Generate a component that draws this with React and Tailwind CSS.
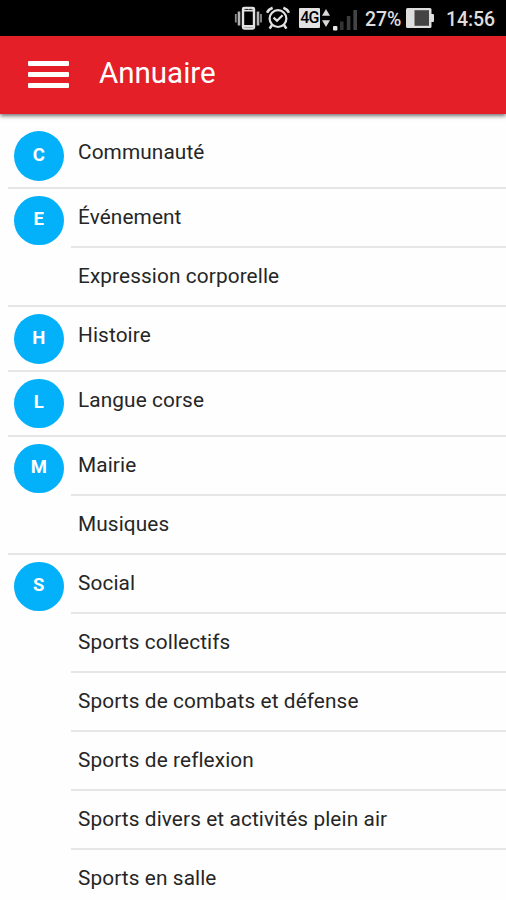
import React from 'react';

const sections = [
  { letter: 'C', items: ['Communauté'] },
  { letter: 'E', items: ['Événement', 'Expression corporelle'] },
  { letter: 'H', items: ['Histoire'] },
  { letter: 'L', items: ['Langue corse'] },
  { letter: 'M', items: ['Mairie', 'Musiques'] },
  {
    letter: 'S',
    items: [
      'Social',
      'Sports collectifs',
      'Sports de combats et défense',
      'Sports de reflexion',
      'Sports divers et activités plein air',
      'Sports en salle',
    ],
  },
];

function VibrateIcon() {
  return (
    <svg className="h-6 w-7 shrink-0" viewBox="0 0 28 24" fill="none" aria-hidden="true">
      <rect x="9" y="1.9" width="11" height="20.6" rx="1.2" stroke="#e2e2e2" strokeWidth="2.4" />
      <path d="M9 4.4h11M9 20h11" stroke="#e2e2e2" strokeWidth="2" />
      <path d="M11.4 3.4h2.4m1.6 0h2" stroke="#222" strokeWidth="1" />
      <path d="M5 5.5v14M24 5.5v14" stroke="#b4b4b4" strokeWidth="2.6" />
      <path d="M1.8 8v8.5M27 8v8.5" stroke="#8c8c8c" strokeWidth="1.8" />
    </svg>
  );
}

function AlarmIcon() {
  return (
    <svg className="h-6 w-6 shrink-0" viewBox="0 0 24 24" fill="none" stroke="#e2e2e2" aria-hidden="true">
      <circle cx="12" cy="12.6" r="8.4" strokeWidth="2.2" />
      <path d="M1 6.8q1.6-3.4 5.6-5M23 6.8q-1.6-3.4-5.6-5" strokeWidth="2.6" />
      <path d="M6 19 3.6 22.6M18 19l2.4 3.6" strokeWidth="2.6" />
      <path d="m7.6 11.6 3.4 3.2 5.6-5.6" strokeWidth="2.2" />
    </svg>
  );
}

function DataArrows() {
  return (
    <svg className="h-5 w-2 shrink-0" viewBox="0 0 8 20" fill="#d8d8d8" aria-hidden="true">
      <path d="M4 1 8 7.8H0zM4 19 0 12.2h8z" />
    </svg>
  );
}

function SignalIcon() {
  return (
    <svg className="h-6 w-6 shrink-0" viewBox="0 0 24 24" aria-hidden="true">
      <rect x="0" y="18" width="4.4" height="4.4" rx="1" fill="#e8e8e8" />
      <rect x="7" y="13.5" width="3.6" height="8.5" fill="#333" />
      <rect x="13.8" y="8" width="3.6" height="14" fill="#3c3c3c" />
      <rect x="20.4" y="2" width="3.6" height="20" fill="#444" />
    </svg>
  );
}

function BatteryIcon() {
  return (
    <svg className="h-5 w-7 shrink-0" viewBox="0 0 28 20" aria-hidden="true">
      <rect x="0" y="0" width="25.5" height="20" rx="1.5" fill="#dedede" />
      <rect x="24" y="6" width="4" height="8" rx="1" fill="#dedede" />
      <rect x="8.5" y="2.2" width="14.5" height="15.6" fill="#444" />
    </svg>
  );
}

function StatusBar() {
  return (
    <div className="flex h-9 items-center justify-end bg-black pr-[10px] text-[19.5px] leading-none font-medium text-[#dddddd]">
      <VibrateIcon />
      <div className="ml-1">
        <AlarmIcon />
      </div>
      <span className="ml-[9px] flex h-5 w-[21px] items-center justify-center rounded-[1px] bg-[#e2e2e2] text-[16px] tracking-tighter text-black">
        4G
      </span>
      <div className="ml-[2px]">
        <DataArrows />
      </div>
      <div className="ml-[3px] pt-1">
        <SignalIcon />
      </div>
      <span className="ml-2 w-[41px] pt-[3px] tracking-[-0.1px]">27%</span>
      <BatteryIcon />
      <span className="ml-[12px] w-[50px] pt-[3px] tracking-[-0.1px]">14:56</span>
    </div>
  );
}

function Header() {
  return (
    <header className="relative z-10 flex h-[78px] items-center bg-[#e41f27] pb-[2px] pl-7 shadow-[0_2px_4px_rgba(0,0,0,0.55)]">
      <button type="button" aria-label="Menu" className="flex w-[41px] flex-col gap-[6px]">
        <span className="h-[5px] rounded-[1px] bg-white" />
        <span className="h-[5px] rounded-[1px] bg-white" />
        <span className="h-[5px] rounded-[1px] bg-white" />
      </button>
      <h1 className="ml-[30px] text-[29.5px] leading-none text-white">Annuaire</h1>
    </header>
  );
}

function Section({ letter, items }) {
  return (
    <section className="ml-2 flex min-h-[64.8px] border-b-2 border-[#e6e6e6]">
      <div className="w-[63px] shrink-0 pt-[7px] pl-[6px]">
        <div className="flex size-[49.5px] items-center justify-center rounded-full bg-[#03b0fa] pb-[2px] text-[18.5px] leading-none font-bold text-white">
          {letter}
        </div>
      </div>
      <ul className="flex-1">
        {items.map((item) => (
          <li
            key={item}
            className="flex h-[59.1px] items-center border-b-2 border-[#e6e6e6] pl-[7px] text-[20.8px] tracking-[0.1px] whitespace-nowrap text-[#262626] last:h-[57.1px] last:border-b-0"
          >
            {item}
          </li>
        ))}
      </ul>
    </section>
  );
}

export default function App() {
  return (
    <div className="h-[900px] w-[506px] overflow-hidden bg-[#fefefe] font-['Roboto',sans-serif]">
      <StatusBar />
      <Header />
      <main className="pt-[10.1px]">
        {sections.map((section) => (
          <Section key={section.letter} {...section} />
        ))}
      </main>
    </div>
  );
}
